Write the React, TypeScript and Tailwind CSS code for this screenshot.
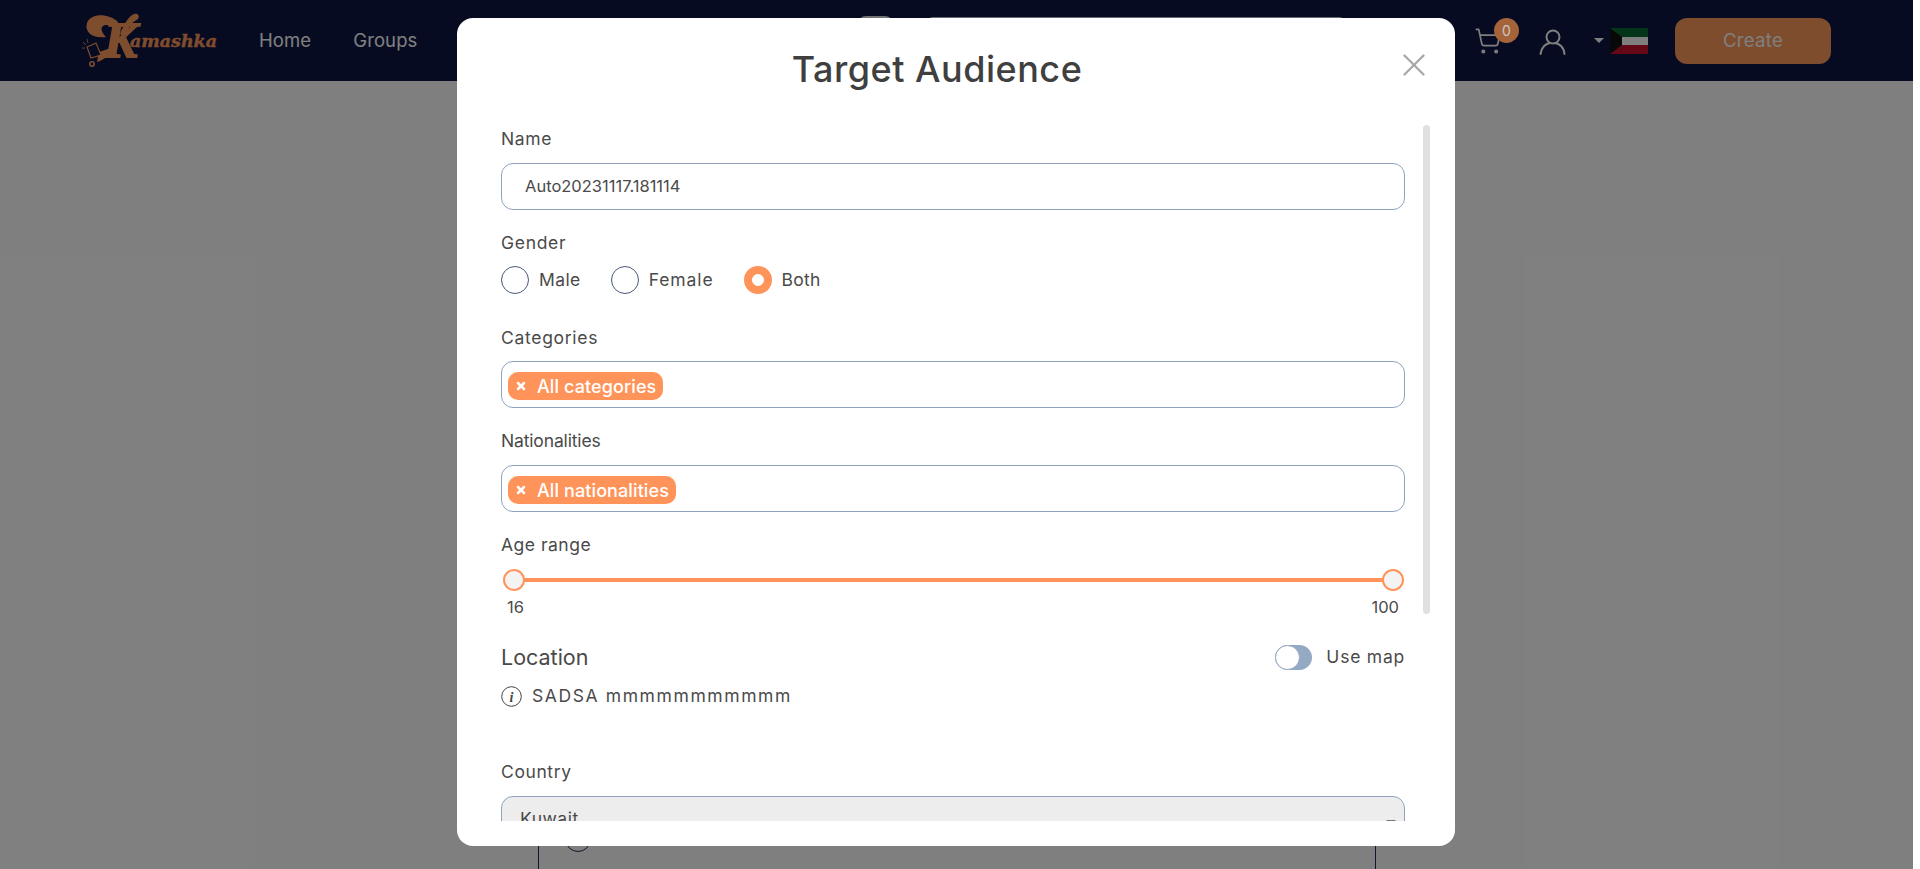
import { ShoppingCart, X } from 'lucide-react';

const FONT = "font-['Inter','Noto_Sans',sans-serif]";

function Logo() {
  return (
    <svg width="140" height="62" viewBox="0 0 140 62" className="shrink-0">
      {/* swash of the K */}
      <path d="M36 12 C26 3 9 3 5 13 C2 22 11 29 24 27 C19 22 17 15 25 15 C29 15 32 17 34 21 Z" fill="#fc9a5a" />
      <path d="M38 24 C42 14 47 6 52 4 C56 3 58 6 56 9 C53 11 50 12 47 18 L42 28 Z" fill="#fc9a5a" />
      <text x="22" y="47" fontFamily="'Liberation Serif', serif" fontStyle="italic" fontWeight="700" fontSize="50" fill="#fc9a5a" stroke="#fc9a5a" strokeWidth="1.8">K</text>
      <path d="M29 38 C27 46 22 50 15 52 L17 42 Z" fill="#fc9a5a" />
      {/* megaphone */}
      <path d="M5 37 L14 33 L19 45 L9 48 Z" fill="#0e1644" stroke="#fc9a5a" strokeWidth="1.2" />
      <path d="M1 32 L4 35 M0 38 L3 38 M5 29 L6 33" stroke="#fc9a5a" strokeWidth="0.8" />
      <circle cx="10" cy="54" r="2.2" fill="none" stroke="#fc9a5a" strokeWidth="1.6" />
      <text x="48" y="37" fontFamily="'DejaVu Serif', serif" fontStyle="italic" fontWeight="700" fontSize="17.5" fill="#fc9a5a" stroke="#fc9a5a" strokeWidth="0.4" textLength="87">amashka</text>
    </svg>
  );
}

function KuwaitFlag() {
  return (
    <svg width="38" height="26" viewBox="0 0 38 26" className="shrink-0">
      <rect width="38" height="9" fill="#0b6b32" />
      <rect y="9" width="38" height="8" fill="#ffffff" />
      <rect y="17" width="38" height="9" fill="#c8102e" />
      <path d="M0 0 L12 9 L12 17 L0 26 Z" fill="#111111" />
    </svg>
  );
}

function Header() {
  return (
    <header className="h-[81px] bg-[#0e1644] flex items-center pl-[82px] pr-[82px] shrink-0">
      <Logo />
      <nav className="flex items-center gap-[42px] ml-[37px] w-[599px] text-white text-[18.5px] tracking-[0.1px]">
        <span>Home</span>
        <span>Groups</span>
      </nav>
      <div className="w-[35px] h-[50px] self-start mt-[16px] rounded-lg bg-gray-200" />
      <div className="ml-[32px] w-[422px] h-[48px] self-start mt-[17px] rounded-lg border border-gray-300" />
      <div className="ml-auto flex items-center">
        <div className="relative mr-[37px]">
          <ShoppingCart size={28} strokeWidth={1.5} className="text-white" />
          <span className="absolute z-20 -top-[9px] left-[20px] w-[25px] h-[25px] rounded-full bg-[#a5633a] text-[#c8c8c8] text-[14px] flex items-center justify-center">0</span>
        </div>
        <svg width="27" height="26" viewBox="0 0 27 26" fill="none" stroke="#ffffff" strokeWidth="2" strokeLinecap="round" className="mt-[2px]">
          <circle cx="14" cy="8" r="6.5" />
          <path d="M1.5 25 C2.5 18 7 14.5 11 14 M16 14 C20 14.5 25 18 25.5 25" />
        </svg>
        <span className="ml-[28px] mr-[6px] w-0 h-0 border-x-[5px] border-x-transparent border-t-[5px] border-t-white" />
        <KuwaitFlag />
        <button className="ml-[27px] w-[156px] h-[46px] rounded-xl bg-[#fc9a5a] text-white text-[18.5px] tracking-[0.3px]">Create</button>
      </div>
    </header>
  );
}

function Radio({ label, checked, tracking }: { label: string; checked?: boolean; tracking: string }) {
  return (
    <div className="flex items-center gap-[10px]">
      {checked ? (
        <span className="w-[28px] h-[28px] rounded-full border-[8px] border-[#ff945a] bg-white" />
      ) : (
        <span className="w-[28px] h-[28px] rounded-full border border-[#4a5a78] bg-white" />
      )}
      <span className={tracking}>{label}</span>
    </div>
  );
}

function Chip({ label }: { label: string }) {
  return (
    <span className="h-[28px] inline-flex items-center rounded-[10px] bg-[#ff945a] text-white text-[18px] font-medium tracking-[0.1px] pl-[7px] pr-[7px] gap-[10px]">
      <X size={12} strokeWidth={5} />
      {label}
    </span>
  );
}

function ChipBox({ label }: { label: string }) {
  return (
    <div className="h-[47px] border border-[#8fa3bf] rounded-[12px] flex items-center pl-[6px] pt-[3px]">
      <Chip label={label} />
    </div>
  );
}

function Thumb() {
  return <span className="relative w-[22px] h-[22px] rounded-full border-2 border-[#ff945a] bg-[#f3f3f3]" />;
}

function TargetAudienceModal() {
  return (
    <div className="absolute inset-0 bg-black/50 z-10">
      <div className={`absolute left-[457px] top-[18px] w-[998px] h-[828px] bg-white rounded-2xl ${FONT} text-[#4a4a4a] text-[17.5px]`}>
        <div className="h-[107px] relative">
          <h2 className="pt-[28px] pr-[38px] text-center text-[36px] leading-[46px] font-medium text-[#3f3f3f] tracking-[0.5px]">Target Audience</h2>
          <X size={38} strokeWidth={1.5} className="absolute right-[22px] top-[28px] text-[#a8a8a8]" />
        </div>
        {/* scrollbar thumb */}
        <div className="absolute left-[966px] top-[107px] w-[7px] h-[489px] rounded-full bg-[#e0e0e0]" />
        <div className="h-[696px] overflow-hidden pl-[44px] pr-[50px] pt-[2px]">
          <div className="leading-[24px] tracking-[0.6px]">Name</div>
          <div className="mt-[12px] h-[47px] border border-[#8fa3bf] rounded-[12px] flex items-center pl-[23px] pb-[1px] text-[16.5px]">Auto20231117.181114</div>

          <div className="mt-[21px] leading-[24px] tracking-[0.7px]">Gender</div>
          <div className="mt-[11px] flex items-center gap-[30px] leading-[28px]">
            <Radio label="Male" tracking="tracking-[0.4px]" />
            <Radio label="Female" tracking="tracking-[0.9px]" />
            <Radio label="Both" checked tracking="tracking-[0.3px]" />
          </div>

          <div className="mt-[32px] leading-[24px] tracking-[0.7px]">Categories</div>
          <div className="mt-[11px]"><ChipBox label="All categories" /></div>

          <div className="mt-[21px] leading-[24px] tracking-[-0.15px]">Nationalities</div>
          <div className="mt-[12px]"><ChipBox label="All nationalities" /></div>

          <div className="mt-[21px] leading-[24px] tracking-[0.5px]">Age range</div>
          <div className="mt-[12px] relative h-[22px] flex justify-between pl-[2px] pr-[1px]">
            <div className="absolute left-[12px] right-[12px] top-[9px] h-[4px] bg-[#ff945a]" />
            <Thumb />
            <Thumb />
          </div>
          <div className="mt-[4px] flex justify-between leading-[24px] pl-[6px] pr-[6px] text-[16.5px]">
            <span>16</span>
            <span>100</span>
          </div>

          <div className="mt-[23px] flex items-center justify-between h-[30px]">
            <span className="text-[21.5px]">Location</span>
            <div className="flex items-center gap-[14px]">
              <div className="w-[37px] h-[25px] rounded-full bg-[#94a9c4]">
                <div className="w-[25px] h-[25px] rounded-full bg-white border border-[#94a9c4]" />
              </div>
              <span className="tracking-[0.77px]">Use map</span>
            </div>
          </div>
          <div className="mt-[12px] flex items-center gap-[10px] leading-[24px]">
            <svg width="21" height="21" viewBox="0 0 21 21" className="shrink-0">
              <circle cx="10.5" cy="10.5" r="9.8" fill="none" stroke="#444444" strokeWidth="1" />
              <text x="10.5" y="15.5" textAnchor="middle" fontFamily="'Liberation Serif', serif" fontStyle="italic" fontWeight="700" fontSize="14" fill="#444444">i</text>
            </svg>
            <span className="tracking-[1.6px]">SADSA mmmmmmmmmmm</span>
          </div>

          <div className="mt-[52px] leading-[24px] tracking-[0.6px]">Country</div>
          <div className="mt-[12px] h-[50px] border border-[#8fa3bf] rounded-[12px] bg-[#ededed] flex items-start justify-between pl-[18px] pr-[8px] pt-[10px] leading-[24px]">
            <span className="tracking-[0.5px]">Kuwait</span>
            <span className="mt-[13px] w-0 h-0 border-x-[5px] border-x-transparent border-t-[5px] border-t-[#777777]" />
          </div>
        </div>
      </div>
    </div>
  );
}

export default function App() {
  return (
    <div className={`h-screen overflow-hidden flex bg-white ${FONT}`}>
      <div className="relative flex-1 min-w-0 flex flex-col">
        <Header />
        <main className="flex-1 flex justify-center pt-[40px]">
          <div className="w-[838px] border-x border-[#1e2f55] pl-[26px] pt-[705px]">
            <span className="block w-[26px] h-[26px] rounded-full border border-[#1e2f55]" />
          </div>
        </main>
        <TargetAudienceModal />
      </div>
      <div className="w-[7px] shrink-0 bg-white" />
    </div>
  );
}
